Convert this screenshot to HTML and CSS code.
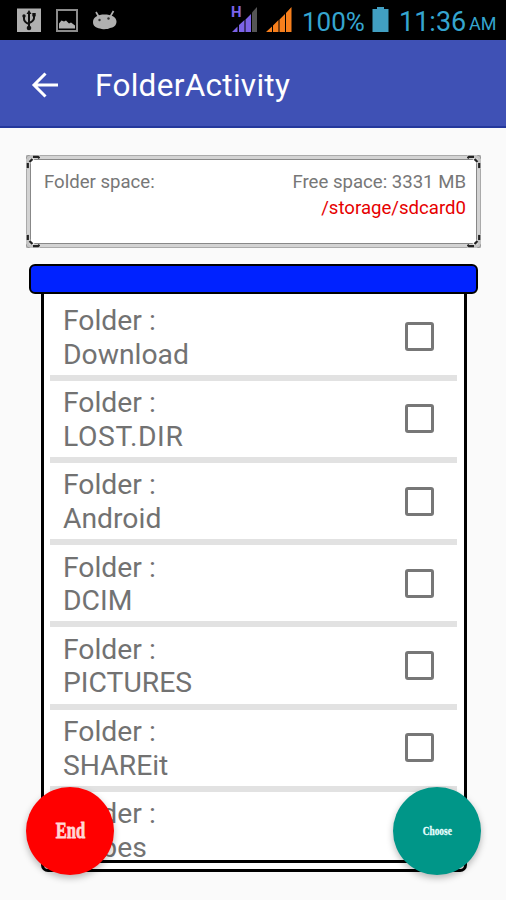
FILE: index.html
```html
<!DOCTYPE html>
<html>
	<head>
		<meta charset="utf-8" />
		<title>FolderActivity</title>
		<link rel="stylesheet" href="styles.css">
	</head>
	<body>
		<!--status bar-->
		<div class="status">
			<svg class="notices" width="120" height="40" viewBox="0 0 120 40">
				<rect x="17" y="8.500" width="24" height="23.500" fill="#b0b0b0"/>
				<g stroke="#111" stroke-width="2" fill="none">
					<path d="M29 12V29M24 16v3q0 3 5 5M34 15v3q0 3-5 5"/>
				</g>
				<path d="M26.500 14L29 10l2.500 4z" fill="#111"/>
				<circle cx="29" cy="28" r="2.300" fill="#111"/>
				<circle cx="24" cy="16" r="1.700" fill="#111"/>
				<rect x="32.300" y="13" width="3.400" height="3.400" fill="#111"/>
				<rect x="57" y="10" width="20" height="21" fill="none" stroke="#8c8c8c" stroke-width="2"/>
				<path d="M59 28.500v-5l2.500-3 2.500 1 2-1 3 3 2-1 4 3v3z" fill="#b0b0b0"/>
				<path d="M99.500 18l-3.500-6M110 17l3.500-6" stroke="#b0b0b0" stroke-width="1.700" fill="none"/>
				<path d="M93 22c0-5 5-7.500 11.500-7.500S116.500 17 116.500 21.500c0 4.500-3.500 6-6.500 6.500-2 1.500-8 1.500-10 .5-4-.5-7-2.500-7-6.500z" fill="#b0b0b0"/>
				<circle cx="99.500" cy="20" r="1.200" fill="#333"/>
				<circle cx="108.500" cy="18.500" r="1.200" fill="#333"/>
			</svg>
			<div class="phone">
				<div class="network">
					<span class="type">H</span>
					<svg width="26" height="26" viewBox="0 0 26 26">
						<path d="M0 25l5.500-5.500V25zM7 18l5.500-5v12H7zM13.500 12.500l5.500-5.500v18h-5.500z" fill="#7c63e8"/>
						<path d="M20 5.500L25 0v25h-5z" fill="#555"/>
					</svg>
				</div>
				<svg class="signal" width="26" height="26" viewBox="0 0 26 26">
					<path d="M0 25l6-5.500V25zM7 18.500l5.500-5.500v12h-5.500zM13.500 12.500l5.500-5.500v18h-5.500zM20 6L25.500 0v25h-5.500z" fill="#f77f1c"/>
				</svg>
				<span class="percent">100%</span>
				<svg class="battery" width="17" height="26" viewBox="0 0 17 26">
					<path d="M5 0h7v2h4.500v23H.5V2H5z" fill="#419fc2"/>
				</svg>
				<span class="time">11:36</span>
				<span class="ampm">AM</span>
			</div>
		</div>
		<!--title bar-->
		<div class="toolbar">
			<svg class="back" width="28" height="28" viewBox="0 0 28 28">
				<path d="M27 14H3M14.500 2.500L3 14l11.500 11.500" fill="none" stroke="#fff" stroke-width="3"/>
			</svg>
			<h1>FolderActivity</h1>
		</div>
		<!--space info-->
		<div class="space">
			<svg class="corner tl"><use href="#corner"/></svg>
			<svg class="corner tr"><use href="#corner"/></svg>
			<svg class="corner bl"><use href="#corner"/></svg>
			<svg class="corner br">
				<g id="corner">
					<path d="M0 0h14v3H0zM0 0h3v14H0z" fill="#c4c4c4"/>
					<path d="M5 13V9q0-1.500-1.500-1.500V5.500L5.500 3.500H7.500Q7.500 5 9 5h4v8z" fill="#fff"/>
					<path d="M7 1.800h5l1.500 1.500M1.800 13V8M3.500 7L6.500 4" fill="none" stroke="#222" stroke-width="2.200"/>
					<path d="M0 4Q0 0 4 0" fill="none" stroke="#999"/>
				</g>
			</svg>
			<div class="space-in">
				<span class="used">Folder space:</span>
				<div class="free">
					<p>Free space: 3331 MB</p>
					<p class="path">/storage/sdcard0</p>
				</div>
			</div>
		</div>
		<!--folder list-->
		<div class="list-head"></div>
		<div class="list">
			<ul class="folders">
				<li><p>Folder :<br>Download</p><i class="check"></i></li>
				<li><p>Folder :<br><span class="wide">LOST.DIR</span></p><i class="check"></i></li>
				<li><p>Folder :<br>Android</p><i class="check"></i></li>
				<li><p>Folder :<br>DCIM</p><i class="check"></i></li>
				<li><p>Folder :<br>PICTURES</p><i class="check"></i></li>
				<li><p>Folder :<br>SHAREit</p><i class="check"></i></li>
				<li><p>Folder :<br><span class="last">Tribes</span></p><i class="check"></i></li>
			</ul>
		</div>
		<div class="fab end"><span>End</span></div>
		<div class="fab choose"><span>Choose</span></div>
	</body>
</html>
```

FILE: styles.css
```css
body,ul,li,p,h1{
	margin: 0;
	padding: 0;
}
li{
	list-style: none;
}
svg{
	display: block;
}
body{
	position: relative;
	height: 900px;
	background: #fafafa;
	font-family: Roboto, "Liberation Sans", sans-serif;
	overflow: hidden;
}
.status{
	display: flex;
	justify-content: space-between;
	height: 40px;
	background: #000;
	color: #35a5cf;
}
.phone{
	display: flex;
	align-items: flex-start;
	height: 33px;
	margin-right: 10px;
	padding-top: 7px;
	white-space: nowrap;
}
.network{
	position: relative;
	margin-right: 8px;
}
.type{
	position: absolute;
	left: -1px;
	top: -3px;
	color: #7c63e8;
	font-size: 15px;
	font-weight: 700;
	line-height: 17px;
}
.signal{
	margin-right: 10px;
}
.percent,.time{
	font-size: 27px;
	line-height: 31px;
}
.percent{
	width: 62px;
	margin-right: 8px;
	font-size: 26px;
}
.battery{
	margin-right: 10px;
}
.time{
	width: 66px;
	margin-right: 4px;
}
.ampm{
	width: 27px;
	padding-top: 5px;
	font-size: 18px;
	line-height: 24px;
}
.toolbar{
	display: flex;
	align-items: center;
	box-sizing: border-box;
	height: 88px;
	padding: 3px 0 0 31px;
	border-bottom: 2px solid #24389c;
	background: #3f51b5;
}
.toolbar h1{
	margin-left: 36px;
	padding-top: 3px;
	color: #fff;
	font-size: 31.500px;
	font-weight: 400;
	line-height: 36px;
	letter-spacing: .3px;
}
.space{
	position: relative;
	box-sizing: border-box;
	width: 455px;
	height: 93px;
	margin: 27px 0 0 26px;
	border: 1px solid #aaa;
	border-radius: 4px;
	padding: 3px;
	background: #d3d3d3;
}
.space-in{
	display: flex;
	justify-content: space-between;
	box-sizing: border-box;
	height: 85px;
	padding: 9px 10px 0 13px;
	border: 1px solid #888;
	background: #fff;
	color: #777;
	font-size: 18.600px;
	line-height: 26px;
}
.free{
	text-align: right;
}
.path{
	color: #e60000;
}
.corner{
	position: absolute;
	width: 14px;
	height: 14px;
}
.tl{
	left: -1px;
	top: -1px;
}
.tr{
	right: -1px;
	top: -1px;
	transform: scaleX(-1);
}
.bl{
	left: -1px;
	bottom: -1px;
	transform: scaleY(-1);
}
.br{
	right: -1px;
	bottom: -1px;
	transform: scale(-1);
}
.list-head{
	box-sizing: border-box;
	width: 449px;
	height: 30px;
	margin: 16px 0 0 29px;
	border: 2px solid #000;
	border-radius: 6px;
	background: #0022ff;
}
.list{
	box-sizing: border-box;
	width: 426px;
	height: 578px;
	margin-left: 41px;
	border: 3px solid #000;
	border-top: 0;
	border-radius: 0 0 7px 7px;
	background: #fff;
}
.folders{
	box-sizing: border-box;
	height: 569px;
	padding: 4.600px 7px 0 6px;
	border-bottom: 3px solid #000;
	overflow: hidden;
}
.folders li{
	display: flex;
	align-items: center;
	justify-content: space-between;
	box-sizing: border-box;
	height: 82.200px;
	padding: 0 23px 0 13px;
	border-bottom: 6px solid #e2e2e2;
	color: #727272;
	font-size: 28.300px;
	line-height: 33.600px;
}
.folders p{
	padding-top: 2px;
}
.folders .wide{
	letter-spacing: .6px;
}
.folders .last{
	margin-left: 6px;
}
.check{
	box-sizing: border-box;
	width: 29px;
	height: 29px;
	border: 3px solid #777;
	border-radius: 3px;
}
/* floating buttons over the list */
.fab{
	display: flex;
	align-items: center;
	justify-content: center;
	position: absolute;
	top: 787px;
	width: 88px;
	height: 88px;
	border-radius: 50%;
	box-shadow: 0 3px 7px rgba(0,0,0,.28);
	font-family: "Liberation Serif", serif;
	font-weight: bold;
}
.end{
	left: 26px;
	background: #f00;
	color: #ffd6d6;
	font-size: 23px;
}
.end span{
	transform: scaleX(.72);
	-webkit-text-stroke: .8px #ffd6d6;
}
.choose{
	left: 393px;
	background: #009688;
	color: #e8ffff;
	font-size: 13px;
}
.choose span{
	transform: scaleX(.72);
	-webkit-text-stroke: .3px #e8ffff;
}
```
